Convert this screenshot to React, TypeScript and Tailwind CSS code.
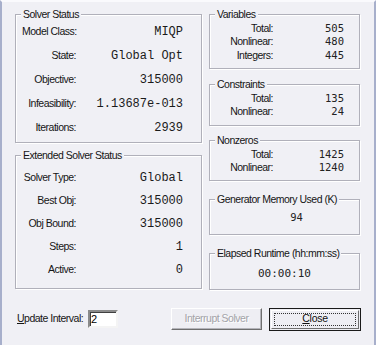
import React from 'react'

type Row = { label: string; value: string }

function GroupBox({
  title,
  className,
  children,
}: {
  title: string
  className: string
  children: React.ReactNode
}): JSX.Element {
  return (
    <div
      className={`relative border border-[#b0b0ba] shadow-[1px_1px_0_#ffffff,inset_1px_1px_0_#ffffff] ${className}`}
    >
      {/* group caption sits over the top border line */}
      <span className="absolute -top-[7px] left-[5px] bg-[#f0f0f5] px-[2px] text-[10.5px] leading-[13px] tracking-[-0.5px] text-[#151515]">
        {title}
      </span>
      {children}
    </div>
  )
}

function StatusRows({ rows, rowH }: { rows: Row[]; rowH: string }): JSX.Element {
  return (
    <div className="flex flex-col pl-[6px] pr-[18px]">
      {rows.map(r => (
        <div key={r.label} className={`flex items-center ${rowH}`}>
          <span className="w-[54px] text-right text-[10.5px] tracking-[-0.5px] whitespace-nowrap text-[#151515]">
            {r.label}
          </span>
          <span className="flex-1 text-right font-['Liberation_Mono',monospace] text-[12px] text-[#1a1a1a]">
            {r.value}
          </span>
        </div>
      ))}
    </div>
  )
}

function CountRows({ rows }: { rows: Row[] }): JSX.Element {
  return (
    <div className="flex flex-col pt-[7px] pr-[15px]">
      {rows.map(r => (
        <div key={r.label} className="flex h-[13.5px] items-center">
          <span className="w-[63px] text-right text-[10.5px] tracking-[-0.5px] whitespace-nowrap text-[#151515]">
            {r.label}
          </span>
          <span className="flex-1 text-right font-['DejaVu_Sans_Mono',monospace] text-[10.5px] text-[#222]">
            {r.value}
          </span>
        </div>
      ))}
    </div>
  )
}

export default function App(): JSX.Element {
  const solver: Row[] = [
    { label: 'Model Class:', value: 'MIQP' },
    { label: 'State:', value: 'Global Opt' },
    { label: 'Objective:', value: '315000' },
    { label: 'Infeasibility:', value: '1.13687e-013' },
    { label: 'Iterations:', value: '2939' },
  ]
  const extended: Row[] = [
    { label: 'Solver Type:', value: 'Global' },
    { label: 'Best Obj:', value: '315000' },
    { label: 'Obj Bound:', value: '315000' },
    { label: 'Steps:', value: '1' },
    { label: 'Active:', value: '0' },
  ]

  return (
    <div className="flex h-[345px] w-[376px] flex-col border-x-2 border-t-2 border-x-[#a7afcb] border-t-[#fafafd] bg-[#f0f0f5] font-['Liberation_Sans',Arial,sans-serif]">
      {/* Group boxes */}
      <div className="flex pt-[12px]">
        <div className="ml-[13px] flex w-[187px] flex-col gap-[12px]">
          <GroupBox title="Solver Status" className="h-[129px] pt-[5px]">
            <StatusRows rows={solver} rowH="h-[24px]" />
          </GroupBox>
          <GroupBox title="Extended Solver Status" className="h-[134px] pt-[10px]">
            <StatusRows rows={extended} rowH="h-[23px]" />
          </GroupBox>
        </div>

        <div className="ml-[7px] flex w-[151px] flex-col">
          <GroupBox title="Variables" className="h-[55px]">
            <CountRows
              rows={[
                { label: 'Total:', value: '505' },
                { label: 'Nonlinear:', value: '480' },
                { label: 'Integers:', value: '445' },
              ]}
            />
          </GroupBox>
          <GroupBox title="Constraints" className="mt-[15px] h-[42px]">
            <CountRows
              rows={[
                { label: 'Total:', value: '135' },
                { label: 'Nonlinear:', value: '24' },
              ]}
            />
          </GroupBox>
          <GroupBox title="Nonzeros" className="mt-[14px] h-[41px]">
            <CountRows
              rows={[
                { label: 'Total:', value: '1425' },
                { label: 'Nonlinear:', value: '1240' },
              ]}
            />
          </GroupBox>
          <GroupBox title="Generator Memory Used (K)" className="mt-[18px] h-[36px]">
            <div className="flex justify-center pt-[11px] pl-[24px] font-['DejaVu_Sans_Mono',monospace] text-[10.5px] leading-[13px] text-[#222]">
              94
            </div>
          </GroupBox>
          <GroupBox title="Elapsed Runtime (hh:mm:ss)" className="mt-[18px] h-[37px]">
            <div className="flex justify-center pt-[13px] font-['DejaVu_Sans_Mono',monospace] text-[11px] leading-[13px] text-[#222]">
              00:00:10
            </div>
          </GroupBox>
        </div>
      </div>

      {/* Bottom controls */}
      <div className="mt-[18px] flex h-[22px] items-center">
        <span className="ml-[15px] w-[71px] text-[10.5px] tracking-[-0.5px] whitespace-nowrap text-[#151515]">
          <span className="underline">U</span>pdate Interval:
        </span>
        <div className="flex h-[18px] w-[30px] items-center border-2 border-t-[#8a8a8a] border-r-[#f4f4f4] border-b-[#f4f4f4] border-l-[#8a8a8a] bg-white pl-[1px] text-[11px] text-black shadow-[inset_1px_1px_0_#404040]">
          2
        </div>
        <button className="ml-[53px] flex h-[22px] w-[91px] items-center justify-center border border-t-[#ffffff] border-r-[#6e6e6e] border-b-[#6e6e6e] border-l-[#ffffff] bg-[#eeeef3] text-[10.5px] tracking-[-0.5px] text-[#a3a3a8] shadow-[inset_-1px_-1px_0_#b4b4ba] [text-shadow:1px_1px_0_#ffffff]">
          Interrupt Solver
        </button>
        <button className="ml-[7px] flex h-[23px] w-[92px] items-center justify-center border border-[#1a1a1a] bg-[#eeeef3] p-[1px]">
          <span className="flex h-full w-full items-center justify-center border border-t-[#ffffff] border-r-[#707070] border-b-[#707070] border-l-[#ffffff] p-[2px]">
            <span className="flex h-full w-full items-center justify-center border border-dotted border-[#333] text-[10.5px] tracking-[-0.3px] text-[#111]">
              <span className="underline">C</span>lose
            </span>
          </span>
        </button>
      </div>
    </div>
  )
}
